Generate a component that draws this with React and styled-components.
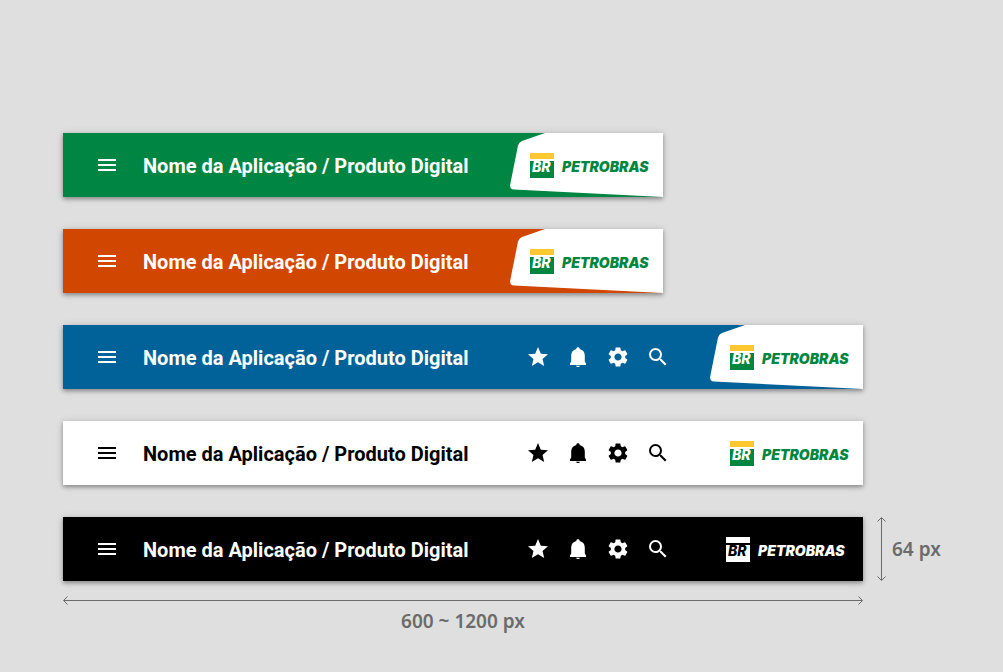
import React from 'react';
import styled, { createGlobalStyle } from 'styled-components';
import { MdMenu, MdStar, MdSettings, MdSearch } from 'react-icons/md';

const GlobalStyle = createGlobalStyle`
  *, *::before, *::after { box-sizing: border-box; }
  body {
    margin: 0;
    min-height: 100vh;
    background: #dfdfdf;
    font-family: Roboto, 'Noto Sans', sans-serif;
  }
`;

const Page = styled.main`
  display: flex;
  flex-direction: column;
  gap: 32px;
  padding: 133px 63px 32px;
`;

const Bar = styled.header`
  display: flex;
  align-items: stretch;
  width: 100%;
  max-width: ${({ $wide }) => ($wide ? 800 : 600)}px;
  min-height: 64px;
  padding-left: 32px;
  background: ${({ $bg }) => $bg};
  color: ${({ $fg }) => $fg};
  box-shadow: 0 2px 4px rgba(0, 0, 0, 0.32), 0 1px 8px rgba(0, 0, 0, 0.14);
`;

const IconButton = styled.button`
  display: flex;
  align-items: center;
  justify-content: center;
  padding: 0;
  border: 0;
  background: none;
  color: inherit;
  cursor: pointer;

  svg {
    display: block;
    width: 24px;
    height: 24px;
  }
`;

const Title = styled.h1`
  flex: 1;
  align-self: center;
  margin: 0 0 0 24px;
  padding-top: 2px;
  font-size: 20px;
  line-height: 28px;
  font-weight: 700;
  white-space: nowrap;
`;

const Actions = styled.nav`
  display: flex;
  gap: 16px;
  margin-right: 40px;
`;

const Brand = styled.a`
  position: relative;
  display: flex;
  align-items: center;
  gap: 8px;
  width: 153px;
  padding-left: ${({ $mono }) => ($mono ? 16 : 20)}px;
  color: ${({ $mono }) => ($mono ? '#fff' : '#008542')};
  text-decoration: none;
`;

const Plate = styled.svg`
  position: absolute;
  inset: 0;
  width: 100%;
  height: 100%;
`;

const Mark = styled.span`
  position: relative;
  display: flex;
  flex-direction: column;
  gap: 2px;
  width: 24px;
  font: italic 800 14px/12px Inter, 'Liberation Sans', sans-serif;

  &::before {
    content: '';
    height: 6px;
    background: ${({ $mono }) => ($mono ? '#fff' : '#fdc82f')};
  }
`;

const Letters = styled.span`
  height: 17px;
  padding-left: 2px;
  background: ${({ $mono }) => ($mono ? '#fff' : '#008542')};
  color: ${({ $mono }) => ($mono ? '#000' : '#fff')};
`;

const Wordmark = styled.span`
  position: relative;
  padding-top: 4px;
  font: italic 900 14px/16px Inter, 'Liberation Sans', sans-serif;
`;

const Specimen = styled.section`
  display: grid;
  grid-template-columns: minmax(0, 800px) auto;
  column-gap: 14px;
  row-gap: 15px;
  justify-content: start;
  margin-right: -63px;
`;

const Measure = styled.div`
  display: flex;
  flex-direction: ${({ $vertical }) => ($vertical ? 'row' : 'column')};
  align-items: center;
  gap: ${({ $vertical }) => ($vertical ? 6 : 4)}px;
  color: #6b6b6b;
  font-family: 'Noto Sans', sans-serif;
  font-size: 19px;
  line-height: 24px;
  font-weight: 600;
  white-space: nowrap;
`;

const Ruler = styled.div`
  display: flex;
  flex-direction: ${({ $vertical }) => ($vertical ? 'column' : 'row')};
  align-items: center;
  ${({ $vertical }) => ($vertical ? 'align-self: stretch;' : 'width: 100%;')}

  &::before {
    content: '';
    order: 1;
    flex: 1;
    ${({ $vertical }) => ($vertical ? 'width: 1px; margin: -4px 0;' : 'height: 1px; margin: 0 -4px;')}
    background: currentColor;
  }
`;

const Head = styled.svg`
  display: block;
  order: ${({ $end }) => ($end ? 2 : 0)};
  fill: none;
  stroke: currentColor;
`;

function BellIcon() {
  return (
    <svg viewBox="0 0 24 24" fill="currentColor" aria-hidden="true">
      <path d="M12 2.300c-1 0-1.700.7-1.700 1.600C7 4.600 5.200 7.300 5.200 10.500V16.500L4 18.500V20H20V18.500L18.800 16.500V10.500C18.800 7.300 17 4.600 13.700 3.900C13.700 3 13 2.300 12 2.300ZM9.900 20.700C10.200 21.600 11 22.100 12 22.100S13.800 21.600 14.100 20.700Z" />
    </svg>
  );
}

const tools = [
  ['Favoritos', MdStar],
  ['Notificações', BellIcon],
  ['Configurações', MdSettings],
  ['Buscar', MdSearch],
];

function Logo({ plate, mono }) {
  return (
    <Brand href="#" $mono={mono}>
      {plate && (
        <Plate viewBox="0 0 153 64" preserveAspectRatio="none" aria-hidden="true">
          <path d="M35 0 L12 8 Q9 9 8 12.500 L0.200 51.500 Q-0.500 56 4 56.500 L153 64 V0 Z" fill="#fff" />
        </Plate>
      )}
      <Mark $mono={mono}>
        <Letters $mono={mono}>BR</Letters>
      </Mark>
      <Wordmark>PETROBRAS</Wordmark>
    </Brand>
  );
}

function AppBar({ bg, fg = '#fff', wide, plate, mono }) {
  return (
    <Bar $bg={bg} $fg={fg} $wide={wide}>
      <IconButton type="button" aria-label="Menu"><MdMenu /></IconButton>
      <Title>Nome da Aplicação / Produto Digital</Title>
      {wide && (
        <Actions>
          {tools.map(([label, Icon]) => (
            <IconButton key={label} type="button" aria-label={label}><Icon /></IconButton>
          ))}
        </Actions>
      )}
      <Logo plate={plate} mono={mono} />
    </Bar>
  );
}

export default function App() {
  return (
    <>
      <GlobalStyle />
      <Page>
        <AppBar bg="#008542" plate />
        <AppBar bg="#d14600" plate />
        <AppBar bg="#006298" wide plate />
        <AppBar bg="#fff" fg="#000" wide />
        <Specimen>
          <AppBar bg="#000" wide mono />
          <Measure $vertical>
            <Ruler $vertical>
              <Head width="9" height="5"><path d="M0.500 4.500 L4.500 0.500 L8.500 4.500" /></Head>
              <Head $end width="9" height="5"><path d="M0.500 0.500 L4.500 4.500 L8.500 0.500" /></Head>
            </Ruler>
            64 px
          </Measure>
          <Measure>
            <Ruler>
              <Head width="5" height="9"><path d="M4.500 0.500 L0.500 4.500 L4.500 8.500" /></Head>
              <Head $end width="5" height="9"><path d="M0.500 0.500 L4.500 4.500 L0.500 8.500" /></Head>
            </Ruler>
            600 ~ 1200 px
          </Measure>
        </Specimen>
      </Page>
    </>
  );
}
